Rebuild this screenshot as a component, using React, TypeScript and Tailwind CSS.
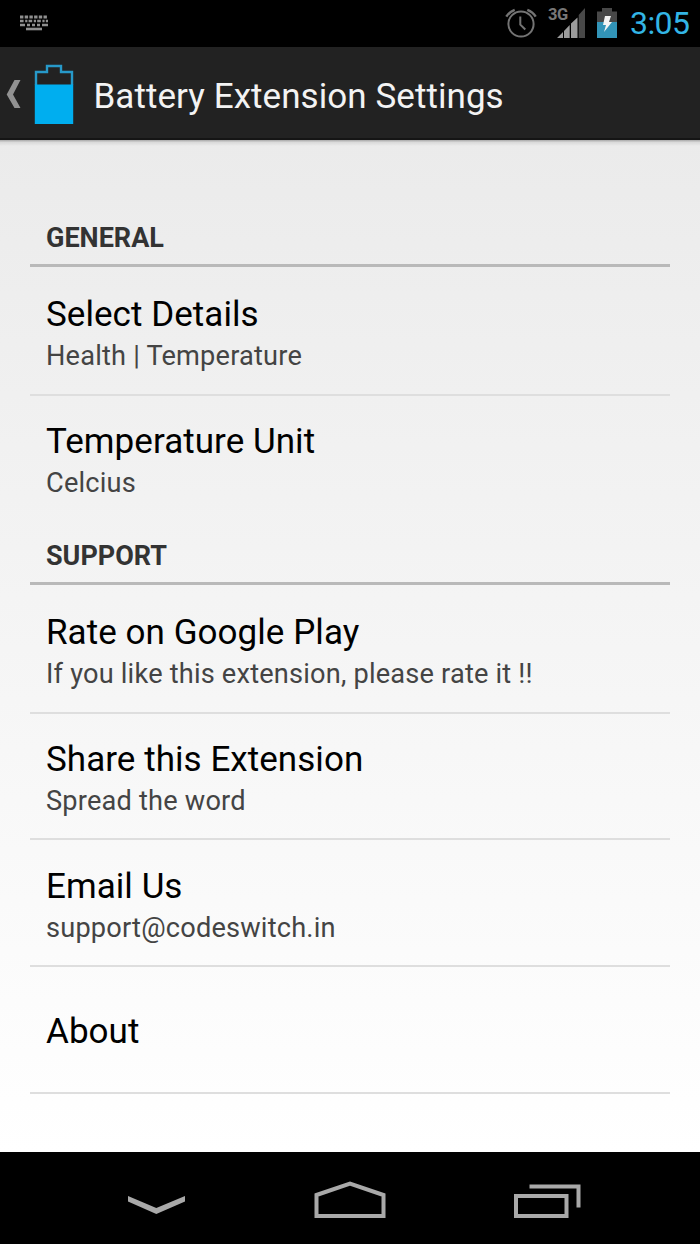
type Item = { title: string; summary?: string };

function SectionHeader({ label }: { label: string }) {
  return (
    <div className="flex h-[61px] items-start border-b-[3px] border-[#b9b9b9] px-4 pt-[12px]">
      <h2 className="text-[27px] leading-[40px] font-bold whitespace-nowrap text-[#333]">{label}</h2>
    </div>
  );
}

function Row({ item, last = false }: { item: Item; last?: boolean }) {
  const border = last ? "border-transparent" : "border-[#dedede]";
  return (
    <div className={`flex h-[126.7px] flex-col border-b-2 px-4 ${border} ${item.summary ? "pt-[24.4px]" : "justify-center pt-[5px]"}`}>
      <div className="text-[35px] leading-[43px] tracking-[0.05px] whitespace-nowrap text-black">{item.title}</div>
      {item.summary && (
        <div className="text-[27.2px] leading-[40px] tracking-[0.19px] whitespace-nowrap text-[#444]">{item.summary}</div>
      )}
    </div>
  );
}

function Keyboard() {
  return (
    <svg className="h-4 w-7" viewBox="0 0 28 16" fill="none" stroke="#8f8f8f">
      <path d="M0 2h28" strokeWidth="3" strokeDasharray="3.4 1.3" />
      <path d="M0 6h28" strokeWidth="2.6" strokeDasharray="3.6 1.6 2.2 1.2" />
      <path d="M0 10h5M7 10h3M12 10h3M17 10h3M22 10h6" strokeWidth="2.6" />
      <path d="M6 14h16" strokeWidth="2.6" />
    </svg>
  );
}

function Alarm() {
  return (
    <svg className="h-[30px] w-8" viewBox="0 0 32 30" fill="none" stroke="#747474">
      <circle cx="16" cy="16" r="12.6" strokeWidth="2" />
      <path d="M15.3 8.5V16.6L20.3 21.5" strokeWidth="2" />
      <path d="M1.3 8.6Q4 4 9.7 1.8M30.7 8.6Q28 4 22.3 1.8" strokeWidth="2.4" />
    </svg>
  );
}

function Signal() {
  return (
    <div className="relative h-[31px] w-[38px]">
      <svg className="h-full w-full" viewBox="0 0 38 31">
        <path d="M8 31L14 25V31zM15 24L20.7 18V31H15zM22 16.5L28.5 10.5V31H22z" fill="#9b9b9b" />
        <path d="M29.7 8L36 1V31H29.7z" fill="#484848" />
      </svg>
      <span className="absolute top-0 -left-px text-[16.5px] leading-[16px] font-bold tracking-[-0.5px] text-[#777]">3G</span>
    </div>
  );
}

function StatusBattery() {
  return (
    <svg className="h-[30px] w-5" viewBox="0 0 20 30">
      <path d="M0 3.5H5V0H15V3.5H20V30H0z" fill="#484848" />
      <path d="M0 14H20V30H0z" fill="#3294b8" />
      <path d="M8 8H14L12 14H15L7 24L9 17H6z" fill="#f4f4f4" />
    </svg>
  );
}

const general: Item[] = [
  { title: "Select Details", summary: "Health | Temperature" },
  { title: "Temperature Unit", summary: "Celcius" },
];

const support: Item[] = [
  { title: "Rate on Google Play", summary: "If you like this extension, please rate it !!" },
  { title: "Share this Extension", summary: "Spread the word" },
  { title: "Email Us", summary: "support@codeswitch.in" },
  { title: "About" },
];

export default function App() {
  return (
    <div className="flex h-[1244px] w-[700px] flex-col overflow-hidden bg-black font-[Roboto,sans-serif]">
      <div className="flex h-[47px] shrink-0 items-start justify-between bg-black pr-[10px] pl-5">
        <div className="pt-[15px]"><Keyboard /></div>
        <div className="flex items-start">
          <div className="mr-[12px] pt-[8px]"><Alarm /></div>
          <div className="mr-[10px] pt-[7px]"><Signal /></div>
          <div className="mr-[13px] pt-[8px]"><StatusBattery /></div>
          <span className="w-[60px] pt-[5px] text-[32px] leading-[37px] tracking-[-0.6px] whitespace-nowrap text-[#33b5e5]">3:05</span>
        </div>
      </div>

      <header className="flex h-[93px] shrink-0 items-start border-b-2 border-[#151515] bg-[#222] pl-[6px]">
        <svg className="mt-[33px] h-[29px] w-[15px]" viewBox="0 0 15 29">
          <path d="M8.5 0H14.5L7 14.5L14.5 28H8.5L0.7 14.5z" fill="#929292" />
        </svg>
        <svg className="mt-[17px] ml-[13px] h-[60px] w-10" viewBox="0 0 40 60">
          <path d="M2 21V8H13V2H27V8H38V21" fill="none" stroke="#2799c9" strokeWidth="2.4" />
          <path d="M0.8 20.5H39.2V60H0.8z" fill="#00aeef" />
        </svg>
        <h1 className="mt-[28px] ml-[19.5px] text-[35px] leading-[44px] tracking-[0.06px] whitespace-nowrap text-[#f3f3f3]">Battery Extension Settings</h1>
      </header>

      <main className="flex h-[1012px] shrink-0 flex-col bg-linear-to-b from-[#ebebeb] to-white">
        <div className="h-[6px] shrink-0 bg-linear-to-b from-[#a8a8a8] via-[#dadada] via-40% to-[#ebebeb]" />
        <div className="flex flex-col px-[30px] pt-[60px]">
          <SectionHeader label="GENERAL" />
          <div className="pt-[1.9px]">
            {general.map((item, i) => (
              <Row key={item.title} item={item} last={i === general.length - 1} />
            ))}
          </div>
          <div className="pt-[1.7px]">
            <SectionHeader label="SUPPORT" />
          </div>
          <div className="pt-[1.9px]">
            {support.map((item) => (
              <Row key={item.title} item={item} />
            ))}
          </div>
        </div>
      </main>

      <nav className="flex h-[92px] items-start bg-black pl-[128px]">
        <svg className="mt-[44px] h-[18px] w-[57px]" viewBox="0 0 57 18">
          <path d="M0 0L28.3 12L57 0V5.5L28.3 18L0 5.5z" fill="#a9a9a9" />
        </svg>
        <svg className="mt-[29px] ml-[129px] h-[37px] w-[72px]" viewBox="0 0 72 37">
          <path d="M2.5 14L36 2.5L69.5 14V35H2.5z" fill="none" stroke="#a9a9a9" strokeWidth="4" />
        </svg>
        <svg className="mt-[32px] ml-[128px] h-[34px] w-[67px]" viewBox="0 0 67 34">
          <path d="M2 12H52.5V32H2z" fill="none" stroke="#a9a9a9" strokeWidth="4" />
          <path d="M15.5 2.5H64.5V23.5" fill="none" stroke="#a9a9a9" strokeWidth="4" />
        </svg>
      </nav>
    </div>
  );
}
